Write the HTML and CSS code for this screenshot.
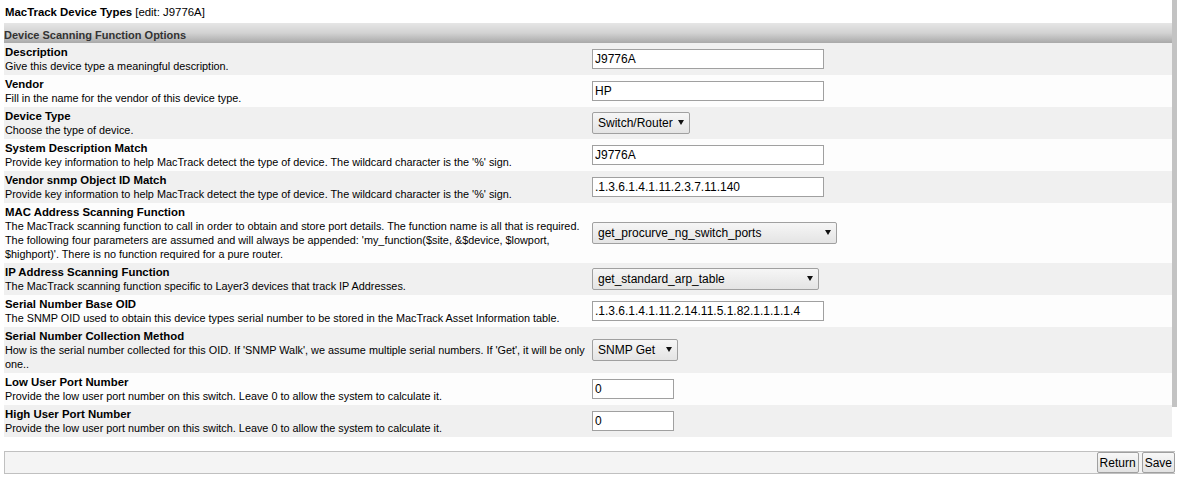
FILE: index.html
```html
<!DOCTYPE html>
<html>
<head>
<meta charset="utf-8">
<title>MacTrack Device Types</title>
<link rel="stylesheet" href="styles.css">
</head>
<body>
<div class="page">
  <div class="title"><b>MacTrack Device Types</b> [edit: J9776A]</div>
  <div class="section-head">Device Scanning Function Options</div>
  <div class="form">
    <div class="row odd">
      <div class="label"><b>Description</b><br>Give this device type a meaningful description.</div>
      <div class="ctrl"><input class="text" type="text" value="J9776A"></div>
    </div>
    <div class="row even">
      <div class="label"><b>Vendor</b><br>Fill in the name for the vendor of this device type.</div>
      <div class="ctrl"><input class="text" type="text" value="HP"></div>
    </div>
    <div class="row odd">
      <div class="label"><b>Device Type</b><br>Choose the type of device.</div>
      <div class="ctrl"><span class="sel w-type"><select><option>Switch/Router</option></select></span></div>
    </div>
    <div class="row even">
      <div class="label"><b>System Description Match</b><br>Provide key information to help MacTrack detect the type of device. The wildcard character is the '%' sign.</div>
      <div class="ctrl"><input class="text" type="text" value="J9776A"></div>
    </div>
    <div class="row odd">
      <div class="label"><b>Vendor snmp Object ID Match</b><br>Provide key information to help MacTrack detect the type of device. The wildcard character is the '%' sign.</div>
      <div class="ctrl"><input class="text" type="text" value=".1.3.6.1.4.1.11.2.3.7.11.140"></div>
    </div>
    <div class="row even">
      <div class="label"><b>MAC Address Scanning Function</b><br>The MacTrack scanning function to call in order to obtain and store port details. The function name is all that is required. The following four parameters are assumed and will always be appended: 'my_function($site, &amp;$device, $lowport, $highport)'. There is no function required for a pure router.</div>
      <div class="ctrl"><span class="sel w-mac"><select><option>get_procurve_ng_switch_ports</option></select></span></div>
    </div>
    <div class="row odd">
      <div class="label"><b>IP Address Scanning Function</b><br>The MacTrack scanning function specific to Layer3 devices that track IP Addresses.</div>
      <div class="ctrl"><span class="sel w-ip"><select><option>get_standard_arp_table</option></select></span></div>
    </div>
    <div class="row even">
      <div class="label"><b>Serial Number Base OID</b><br>The SNMP OID used to obtain this device types serial number to be stored in the MacTrack Asset Information table.</div>
      <div class="ctrl"><input class="text" type="text" value=".1.3.6.1.4.1.11.2.14.11.5.1.82.1.1.1.1.4"></div>
    </div>
    <div class="row odd">
      <div class="label"><b>Serial Number Collection Method</b><br>How is the serial number collected for this OID. If 'SNMP Walk', we assume multiple serial numbers. If 'Get', it will be only one..</div>
      <div class="ctrl"><span class="sel w-snmp"><select><option>SNMP Get</option></select></span></div>
    </div>
    <div class="row even">
      <div class="label"><b>Low User Port Number</b><br>Provide the low user port number on this switch. Leave 0 to allow the system to calculate it.</div>
      <div class="ctrl"><input class="text short" type="text" value="0"></div>
    </div>
    <div class="row odd">
      <div class="label"><b>High User Port Number</b><br>Provide the low user port number on this switch. Leave 0 to allow the system to calculate it.</div>
      <div class="ctrl"><input class="text short" type="text" value="0"></div>
    </div>
  </div>
  <div class="footer">
    <button class="btn" type="button">Return</button>
    <button class="btn" type="button">Save</button>
  </div>
</div>
<div class="scrollbar"></div>
</body>
</html>
```

FILE: styles.css
```css
html, body {
  margin: 0;
  padding: 0;
  background: #ffffff;
}
body {
  font-family: "Liberation Sans", Arial, sans-serif;
  font-size: 11px;
  color: #000;
  overflow: hidden;
}
.page {
  margin-left: 4px;
  margin-right: 5px;
}
.title {
  height: 23px;
  line-height: 25px;
  padding-left: 1px;
  font-size: 11.4px;
}
.section-head {
  height: 20px;
  line-height: 24px;
  font-weight: bold;
  color: #333;
  background: linear-gradient(#e6e6e6, #d2d2d2 50%, #a9a9a9);
}
.form {
  display: flex;
  flex-direction: column;
}
.row {
  display: grid;
  grid-template-columns: 50% 50%;
  align-items: center;
  padding: 2px 0;
  line-height: 14px;
}
.row.odd { background: #f0f0f0; }
.row.even { background: #fdfdfd; }
.label {
  padding-left: 1px;
  font-size: 10.85px;
}
.label b {
  font-size: 11.4px;
}
.ctrl {
  padding-left: 4px;
}
.text {
  box-sizing: border-box;
  width: 232px;
  height: 20px;
  margin: 0;
  padding: 0 2px;
  border: 1px solid #a0a0a0;
  background: #fff;
  font-family: "Liberation Sans", Arial, sans-serif;
  font-size: 12px;
  color: #000;
  display: block;
}
.text.short { width: 82px; }
.sel {
  position: relative;
  display: block;
  box-sizing: border-box;
  height: 22px;
}
.sel select {
  appearance: none;
  -webkit-appearance: none;
  box-sizing: border-box;
  width: 100%;
  height: 22px;
  margin: 0;
  padding: 0 12px 0 5px;
  border: 1px solid #a0a0a0;
  border-radius: 2px;
  background: linear-gradient(#f6f6f6, #e4e4e4);
  font-family: "Liberation Sans", Arial, sans-serif;
  font-size: 12px;
  color: #000;
}
.sel::after {
  content: "";
  position: absolute;
  right: 6px;
  top: 8px;
  border-left: 3px solid transparent;
  border-right: 3px solid transparent;
  border-top: 5px solid #111;
  pointer-events: none;
}
.w-type { width: 98px; }
.w-mac { width: 245px; }
.w-ip { width: 227px; }
.w-snmp { width: 86px; }
.footer {
  margin-top: 14px;
  height: 23px;
  box-sizing: border-box;
  border: 1px solid #c0c0c0;
  border-right: none;
  background: #f4f4f4;
  display: flex;
  justify-content: flex-end;
  align-items: center;
  gap: 3px;
  margin-right: -3px;
}
.btn {
  height: 21px;
  margin: 0;
  padding: 0 2px;
  border: 1px solid #a0a0a0;
  border-radius: 2px;
  background: linear-gradient(#f8f8f8, #e2e2e2);
  font-family: "Liberation Sans", Arial, sans-serif;
  font-size: 12px;
  color: #000;
}
.scrollbar {
  position: absolute;
  top: 0;
  right: 0;
  width: 5px;
  height: 407px;
  background: #c3c3c3;
}
```
